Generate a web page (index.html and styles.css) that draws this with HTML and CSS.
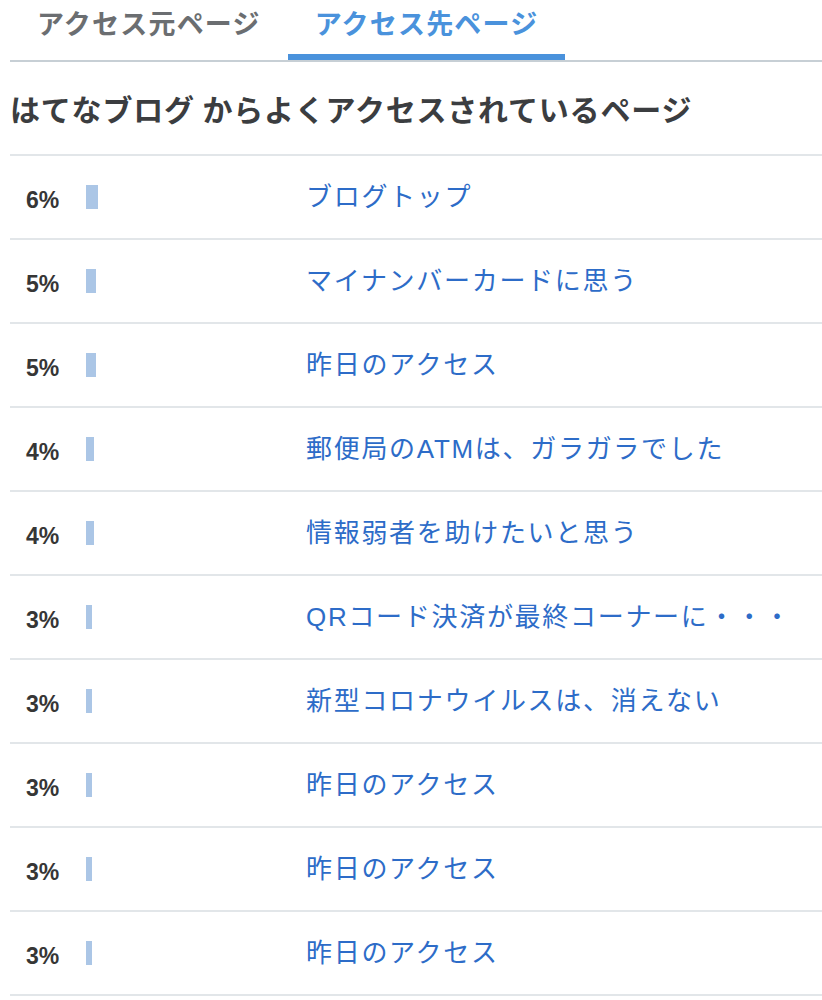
FILE: index.html
```html
<!DOCTYPE html>
<html lang="ja">
<head>
<meta charset="utf-8">
<title>アクセス先ページ</title>
<link rel="stylesheet" href="styles.css">
</head>
<body>
<div class="page">
  <div class="tabs">
    <div class="tab">アクセス元ページ</div>
    <div class="tab active">アクセス先ページ</div>
  </div>
  <h2 class="title">はてなブログ からよくアクセスされているページ</h2>
  <ul class="list">
    <li class="row"><span class="pct">6%</span><span class="bar-cell"><span class="bar" style="width:12px"></span></span><a class="link" href="#">ブログトップ</a></li>
    <li class="row"><span class="pct">5%</span><span class="bar-cell"><span class="bar" style="width:10px"></span></span><a class="link" href="#">マイナンバーカードに思う</a></li>
    <li class="row"><span class="pct">5%</span><span class="bar-cell"><span class="bar" style="width:10px"></span></span><a class="link" href="#">昨日のアクセス</a></li>
    <li class="row"><span class="pct">4%</span><span class="bar-cell"><span class="bar" style="width:8px"></span></span><a class="link" href="#">郵便局のATMは、ガラガラでした</a></li>
    <li class="row"><span class="pct">4%</span><span class="bar-cell"><span class="bar" style="width:8px"></span></span><a class="link" href="#">情報弱者を助けたいと思う</a></li>
    <li class="row"><span class="pct">3%</span><span class="bar-cell"><span class="bar" style="width:6px"></span></span><a class="link" href="#">QRコード決済が最終コーナーに・・・</a></li>
    <li class="row"><span class="pct">3%</span><span class="bar-cell"><span class="bar" style="width:6px"></span></span><a class="link" href="#">新型コロナウイルスは、消えない</a></li>
    <li class="row"><span class="pct">3%</span><span class="bar-cell"><span class="bar" style="width:6px"></span></span><a class="link" href="#">昨日のアクセス</a></li>
    <li class="row"><span class="pct">3%</span><span class="bar-cell"><span class="bar" style="width:6px"></span></span><a class="link" href="#">昨日のアクセス</a></li>
    <li class="row"><span class="pct">3%</span><span class="bar-cell"><span class="bar" style="width:6px"></span></span><a class="link" href="#">昨日のアクセス</a></li>
  </ul>
</div>
</body>
</html>
```

FILE: styles.css
```css
html, body {
  margin: 0;
  padding: 0;
  background: #ffffff;
}

body {
  font-family: "Noto Sans CJK JP", "Liberation Sans", sans-serif;
  overflow: hidden;
}

.page {
  padding-left: 10px;
}

.tabs {
  display: flex;
  border-bottom: 2px solid #c7cfd5;
}

.tab {
  padding: 0 27px;
  height: 54px;
  line-height: 46px;
  font-size: 27px;
  font-weight: 700;
  letter-spacing: 1.2px;
  color: #6b6e71;
  border-bottom: 6px solid transparent;
}

.tab.active {
  color: #4a92dc;
  border-bottom-color: #4a92dc;
}

.title {
  margin: 0;
  padding: 24px 0 23px;
  font-size: 30px;
  line-height: 45px;
  font-weight: 700;
  letter-spacing: 0.8px;
  color: #3b3d40;
}

.list {
  list-style: none;
  margin: 0;
  padding: 0;
  border-bottom: 2px solid #e2e6e9;
}

.row {
  display: flex;
  align-items: center;
  height: 82px;
  border-top: 2px solid #e2e6e9;
}

.pct {
  box-sizing: border-box;
  width: 76px;
  padding-left: 16px;
  padding-top: 6px;
  font-family: "Liberation Sans", "Noto Sans CJK JP", sans-serif;
  font-size: 23px;
  font-weight: 700;
  color: #363636;
}

.bar-cell {
  display: flex;
  width: 200px;
}

.bar {
  display: block;
  height: 24px;
  background: #abc6e6;
}

.link {
  margin-left: 20px;
  font-family: "Liberation Sans", "Noto Sans CJK JP", sans-serif;
  font-size: 26px;
  line-height: 36px;
  letter-spacing: 1.7px;
  color: #2d6cc8;
  text-decoration: none;
  white-space: nowrap;
}
```
